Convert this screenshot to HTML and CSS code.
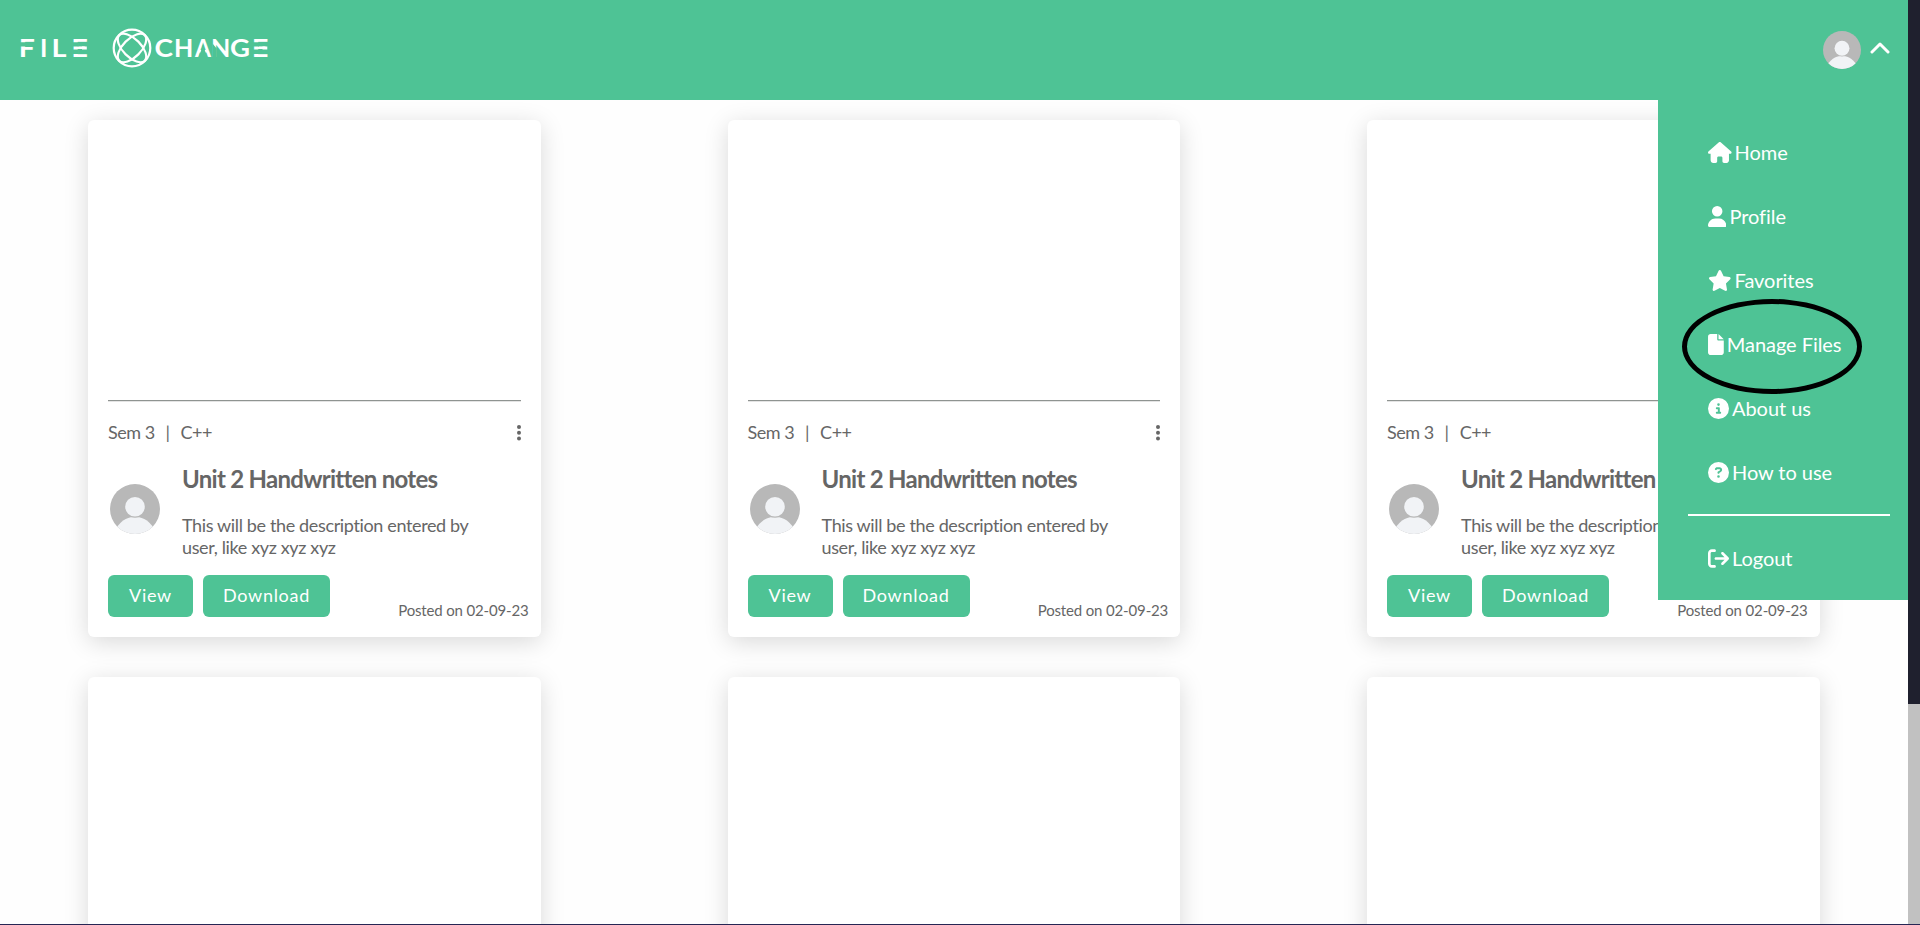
FILE: index.html
```html
<!DOCTYPE html>
<html lang="en">
<head>
<meta charset="utf-8">
<title>File Xchange</title>
<link rel="stylesheet" href="styles.css">
</head>
<body>
<svg class="defs" aria-hidden="true">
  <symbol id="avatar" viewBox="0 0 50 50">
    <clipPath id="disc"><circle cx="25" cy="25" r="25"/></clipPath>
    <g clip-path="url(#disc)">
      <rect width="50" height="50" fill="#b8b8b8"/>
      <path d="M25 33c-5 0-13 1-20 13v8h40v-8C38 34 30 33 25 33z" fill="#f1f3f6"/>
      <circle cx="25" cy="22.7" r="11" fill="#b8b8b8"/>
      <circle cx="25" cy="22.7" r="9.8" fill="#f1f3f6"/>
    </g>
  </symbol>
  <symbol id="dots" viewBox="0 0 4 16"><circle cx="2" cy="2" r="2"/><circle cx="2" cy="7.8" r="2"/><circle cx="2" cy="13.6" r="2"/></symbol>
</svg>
<div class="window">
  <div class="page">
    <header class="header">
      <svg class="logo" width="256" height="40" viewBox="0 0 256 40">
        <g class="logo-text" lengthAdjust="spacingAndGlyphs">
          <text x="-1.300" y="29" textLength="16.100" lengthAdjust="spacingAndGlyphs">F</text>
          <text x="20" y="29">I</text>
          <text x="31.500" y="29" textLength="15" lengthAdjust="spacingAndGlyphs">L</text>
          <text x="51.200" y="29" textLength="16.700" lengthAdjust="spacingAndGlyphs">E</text>
          <text x="134.400" y="29" textLength="18.500" lengthAdjust="spacingAndGlyphs">C</text>
          <text x="154" y="29">H</text>
          <text x="175" y="29" textLength="16" lengthAdjust="spacingAndGlyphs">A</text>
          <text x="191" y="29">N</text>
          <text x="210" y="29" textLength="20" lengthAdjust="spacingAndGlyphs">G</text>
          <text x="231.700" y="29" textLength="16.700" lengthAdjust="spacingAndGlyphs">E</text>
        </g>
        <!-- gaps in the letter stems -->
        <path class="cover" d="M0 14.200h6v4.300H0zM52.500 14.200h6v4.300h-6zM52.500 21.500h6v4.500h-6zM233 14.200h6v4.300h-6zM233 21.500h6v4.500h-6zM183 16.500l4.200 13h-8.400zM192.500 15.500l4.200 5v9h-4.200z"/>
        <path class="bar" d="M62 18.600h4.800v2.900H62zM242.500 18.600h4.800v2.900h-4.800z"/>
        <g class="emblem"><circle cx="112" cy="20" r="18.300"/><ellipse cx="112" cy="20" rx="18" ry="9" transform="rotate(45 112 20)"/><ellipse cx="112" cy="20" rx="18" ry="9" transform="rotate(-45 112 20)"/></g>
      </svg>
      <div class="account">
        <svg class="account-avatar"><use href="#avatar"/></svg>
        <svg class="chevron" width="20" height="12" viewBox="0 0 20 12"><path d="M2 10l8-8 8 8"/></svg>
      </div>
    </header>
    <main class="cards">
      <article class="card">
        <hr class="rule">
        <div class="meta"><span>Sem 3</span><span>|</span><span>C++</span><svg class="dots"><use href="#dots"/></svg></div>
        <div class="info"><svg class="avatar"><use href="#avatar"/></svg><div><h2>Unit 2 Handwritten notes</h2><p>This will be the description entered by user, like xyz xyz xyz</p></div></div>
        <div class="actions"><button class="view">View</button><button class="download">Download</button><span class="posted">Posted on 02-09-23</span></div>
      </article>
      <article class="card">
        <hr class="rule">
        <div class="meta"><span>Sem 3</span><span>|</span><span>C++</span><svg class="dots"><use href="#dots"/></svg></div>
        <div class="info"><svg class="avatar"><use href="#avatar"/></svg><div><h2>Unit 2 Handwritten notes</h2><p>This will be the description entered by user, like xyz xyz xyz</p></div></div>
        <div class="actions"><button class="view">View</button><button class="download">Download</button><span class="posted">Posted on 02-09-23</span></div>
      </article>
      <article class="card">
        <hr class="rule">
        <div class="meta"><span>Sem 3</span><span>|</span><span>C++</span><svg class="dots"><use href="#dots"/></svg></div>
        <div class="info"><svg class="avatar"><use href="#avatar"/></svg><div><h2>Unit 2 Handwritten notes</h2><p>This will be the description entered by user, like xyz xyz xyz</p></div></div>
        <div class="actions"><button class="view">View</button><button class="download">Download</button><span class="posted">Posted on 02-09-23</span></div>
      </article>
      <article class="card"></article>
      <article class="card"></article>
      <article class="card"></article>
    </main>
    <nav class="menu">
      <a><svg width="23.6" height="21" viewBox="0 0 576 512"><path d="M575.800 255.500c0 18-15 32.100-32 32.100h-32l.7 160.200c0 35-26 64-56 64H392c-22 0-40-18-40-40v-87.800c0-17.700-14.300-32-32-32h-64c-17.700 0-32 14.300-32 32v88c0 22-18 40-40 40h-56c-35 0-64-26-64-64V287.600H32c-18 0-32-14-32-32.100 0-9 3-17 10-24L266.400 8c7-7 15-8 22-8s15 2 21 7l255.400 224.500c8 7 12 15 11 24z"/></svg>Home</a>
      <a><svg width="18.400" height="21" viewBox="0 0 448 512"><path d="M224 256a128 128 0 1 0 0-256 128 128 0 1 0 0 256zm-45.700 48C79.800 304 0 383.800 0 482.300 0 498.700 13.300 512 29.700 512h388.600c16.400 0 29.700-13.300 29.700-29.700C448 383.800 368.200 304 269.700 304h-91.400z"/></svg>Profile</a>
      <a><svg width="23.600" height="21" viewBox="0 0 576 512"><path d="M316.900 18C311.600 7 300.400 0 288.100 0s-23.400 7-28.800 18L195 150.300 51.400 171.500c-12 1.800-22 10.200-25.700 21.700s-.7 24.200 7.900 32.700L137.800 329l-24.600 145.700c-2 12 3 24.200 12.900 31.300s23 8 33.800 2.300l128.300-68.500 128.300 68.500c10.800 5.700 23.900 4.900 33.800-2.300s14.900-19.300 12.900-31.300L438.500 329l104.200-103.100c8.600-8.500 11.700-21.200 7.900-32.700s-13.700-19.900-25.700-21.700L381.200 150.300 316.900 18z"/></svg>Favorites</a>
      <a class="marked"><svg width="15.800" height="21" viewBox="0 0 384 512"><path d="M0 64C0 28.700 28.700 0 64 0h160v128c0 17.700 14.300 32 32 32h128v288c0 35.300-28.700 64-64 64H64c-35.300 0-64-28.700-64-64V64zm384 64H256V0l128 128z"/></svg>Manage Files</a>
      <a><svg width="21" height="21" viewBox="0 0 512 512"><path fill-rule="evenodd" d="M256 512a256 256 0 1 0 0-512 256 256 0 1 0 0 512zM216 336h24v-64h-24c-13.300 0-24-10.700-24-24s10.700-24 24-24h48c13.300 0 24 10.700 24 24v88h8c13.300 0 24 10.700 24 24s-10.700 24-24 24h-80c-13.300 0-24-10.700-24-24s10.700-24 24-24zm40-208a32 32 0 1 1 0 64 32 32 0 1 1 0-64z"/></svg>About us</a>
      <a><svg width="21" height="21" viewBox="0 0 512 512"><path fill-rule="evenodd" d="M256 512a256 256 0 1 0 0-512 256 256 0 1 0 0 512zM169.800 165.300c7.900-22.300 29.100-37.300 52.800-37.300h58.300c34.900 0 63.100 28.300 63.100 63.100 0 22.600-12.100 43.500-31.700 54.800L280 264.400c-.2 13-10.900 23.600-24 23.600-13.300 0-24-10.700-24-24v-13.500c0-8.600 4.600-16.500 12.100-20.800l44.300-25.400c4.700-2.700 7.600-7.700 7.600-13.100 0-8.400-6.800-15.100-15.100-15.100h-58.300c-3.400 0-6.400 2.100-7.500 5.300l-.4 1.200c-4.400 12.500-18.200 19-30.600 14.600s-19-18.200-14.600-30.600l.3-1.300zM224 352a32 32 0 1 1 64 0 32 32 0 1 1-64 0z"/></svg>How to use</a>
      <hr>
      <a class="logout"><svg width="21" height="21" viewBox="0 0 512 512"><path d="M502.600 278.600c12.500-12.500 12.500-32.800 0-45.300l-128-128c-12.500-12.500-32.800-12.500-45.300 0s-12.500 32.800 0 45.300L402.700 224H192c-17.700 0-32 14.300-32 32s14.300 32 32 32h210.700l-73.400 73.400c-12.500 12.500-12.500 32.800 0 45.300s32.800 12.500 45.300 0l128-128zM160 96c17.700 0 32-14.300 32-32s-14.300-32-32-32H96C43 32 0 75 0 128v256c0 53 43 96 96 96h64c17.700 0 32-14.300 32-32s-14.300-32-32-32H96c-17.700 0-32-14.300-32-32V128c0-17.700 14.300-32 32-32h64z"/></svg>Logout</a>
    </nav>
  </div>
  <div class="scrollbar"><div class="thumb"></div></div>
</div>
</body>
</html>
```
FILE: styles.css
```css
*, *::after { box-sizing: border-box; }
body { margin: 0; font-family: Lato, sans-serif; color: #666; background: #fefefe; }
.defs { position: absolute; width: 0; height: 0; }
.window { display: flex; height: 925px; overflow: hidden; border-bottom: 1px solid #262654; }
.page { position: relative; flex: 1; height: 924px; overflow: hidden; }
.header { position: relative; z-index: 1; display: flex; justify-content: space-between; height: 100px; padding: 28px 18px 0 20px; background: #4ec395; }
.logo-text { font-size: 25px; font-weight: 700; fill: #fff; }
.cover { fill: #4ec395; }
.bar { fill: #fff; }
.emblem { fill: none; stroke: #fff; stroke-width: 2.2; }
.account { display: flex; gap: 9px; padding-top: 3px; }
.account-avatar { width: 38px; height: 38px; }
.chevron { margin-top: 11px; fill: none; stroke: #fff; stroke-width: 3; stroke-linecap: round; stroke-linejoin: round; }
.cards { display: grid; grid-template-columns: repeat(3, 452.660px); column-gap: 186.860px; row-gap: 40px; padding: 20px 0 0 88px; }
.card { height: 517px; border-radius: 6px; background: #fff; box-shadow: 0 5px 25px rgba(0, 0, 0, .15); padding: 280px 20px 0; }
.rule { height: 2px; margin: 0; border: solid; border-width: 1px 0; border-color: #8f9491 transparent #e4e4e4; }
.meta { display: flex; gap: 11px; margin-top: 19px; font-size: 18px; line-height: 22px; letter-spacing: -.5px; }
.dots { width: 4px; height: 16px; margin: 4px 0 0 auto; fill: #666; }
.info { display: flex; gap: 22px; margin-top: 21px; padding-left: 2px; }
.avatar { flex: none; width: 50px; height: 50px; margin-top: 20px; }
.info h2 { margin: 0; font-size: 24px; line-height: 29px; font-weight: 700; letter-spacing: -.72px; white-space: nowrap; }
.info p { width: 300px; margin: 22px 0 0; font-size: 18px; line-height: 21.500px; letter-spacing: -.36px; }
.actions { display: flex; gap: 10px; margin: 17px -8px 0 0; }
button { height: 42px; padding: 0 0 2px; border: 0; border-radius: 6px; background: #4ec395; color: #fff; font: 18px Lato, sans-serif; letter-spacing: .7px; }
.view { width: 85px; }
.download { width: 127px; }
.posted { margin: 26px 0 0 auto; font-size: 15px; line-height: 18px; letter-spacing: -.15px; }
.menu { position: absolute; right: 0; top: 100px; width: 250px; height: 500px; padding: 20px 18px 0 30px; background: #4ec395; color: #fff; font-size: 20px; }
.menu a { display: flex; align-items: center; gap: 3px; height: 64px; padding-left: 20px; letter-spacing: -.05px; }
.menu svg { flex: none; fill: #fff; }
.menu hr { height: 2px; margin: 10px 0 8px; border: 0; background: #fff; }
.marked { position: relative; }
.marked::after { content: ""; position: absolute; left: -6px; top: -13px; width: 180px; height: 95px; border: 5px solid #000; border-radius: 50%; }
.menu .logout { height: 68px; }
.scrollbar { width: 12px; height: 925px; background: #c1c1c1; }
.thumb { height: 704px; background: #1f202e; }
```
